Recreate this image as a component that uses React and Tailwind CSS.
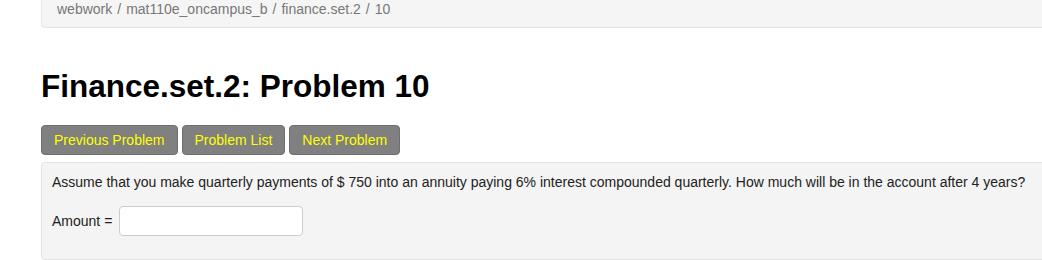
const App = () => {
  return (
    <div className="w-[1042px] h-[260px] overflow-hidden bg-white" style={{ fontFamily: '"Liberation Sans", Arial, sans-serif' }}>
      <div className="ml-[41px] w-[1060px]">
        {/* breadcrumb */}
        <div className="-mt-[10px] bg-[#f5f5f5] border border-[#e6e6e6] rounded px-[15px] py-[8px] text-[14px] leading-[20px] text-[#777]">
          <span>webwork</span>
          <span className="px-[5px]">/</span>
          <span>mat110e_oncampus_b</span>
          <span className="px-[5px]">/</span>
          <span>finance.set.2</span>
          <span className="px-[5px]">/</span>
          <span>10</span>
        </div>

        <h2 className="mt-[38px] text-[31.5px] leading-[40px] font-bold text-black">
          Finance.set.2: Problem 10
        </h2>

        <div className="mt-[19px] flex gap-1">
          <button className="px-3 py-1 text-[14px] leading-[20px] bg-[#808080] border border-[#6e6e6e] rounded text-[#ffff00]">
            Previous Problem
          </button>
          <button className="px-3 py-1 text-[14px] leading-[20px] bg-[#808080] border border-[#6e6e6e] rounded text-[#ffff00]">
            Problem List
          </button>
          <button className="px-3 py-1 text-[14px] leading-[20px] bg-[#808080] border border-[#6e6e6e] rounded text-[#ffff00]">
            Next Problem
          </button>
        </div>

        <div className="mt-[7px] bg-[#f4f4f4] border border-[#e3e3e3] rounded pl-[10px] pt-[9px] pb-[23px] text-[14px] leading-[20px] text-[#222]">
          <p>
            Assume that you make quarterly payments of $ 750 into an annuity paying 6% interest compounded quarterly. How much will be in the account after 4 years?
          </p>
          <div className="mt-[14px] flex items-center">
            <span>Amount =</span>
            <input
              type="text"
              className="ml-[7px] w-[184px] h-[30px] bg-white border border-[#ccc] rounded px-[6px] text-[14px] outline-none"
            />
          </div>
        </div>
      </div>
    </div>
  );
};

export default App;
